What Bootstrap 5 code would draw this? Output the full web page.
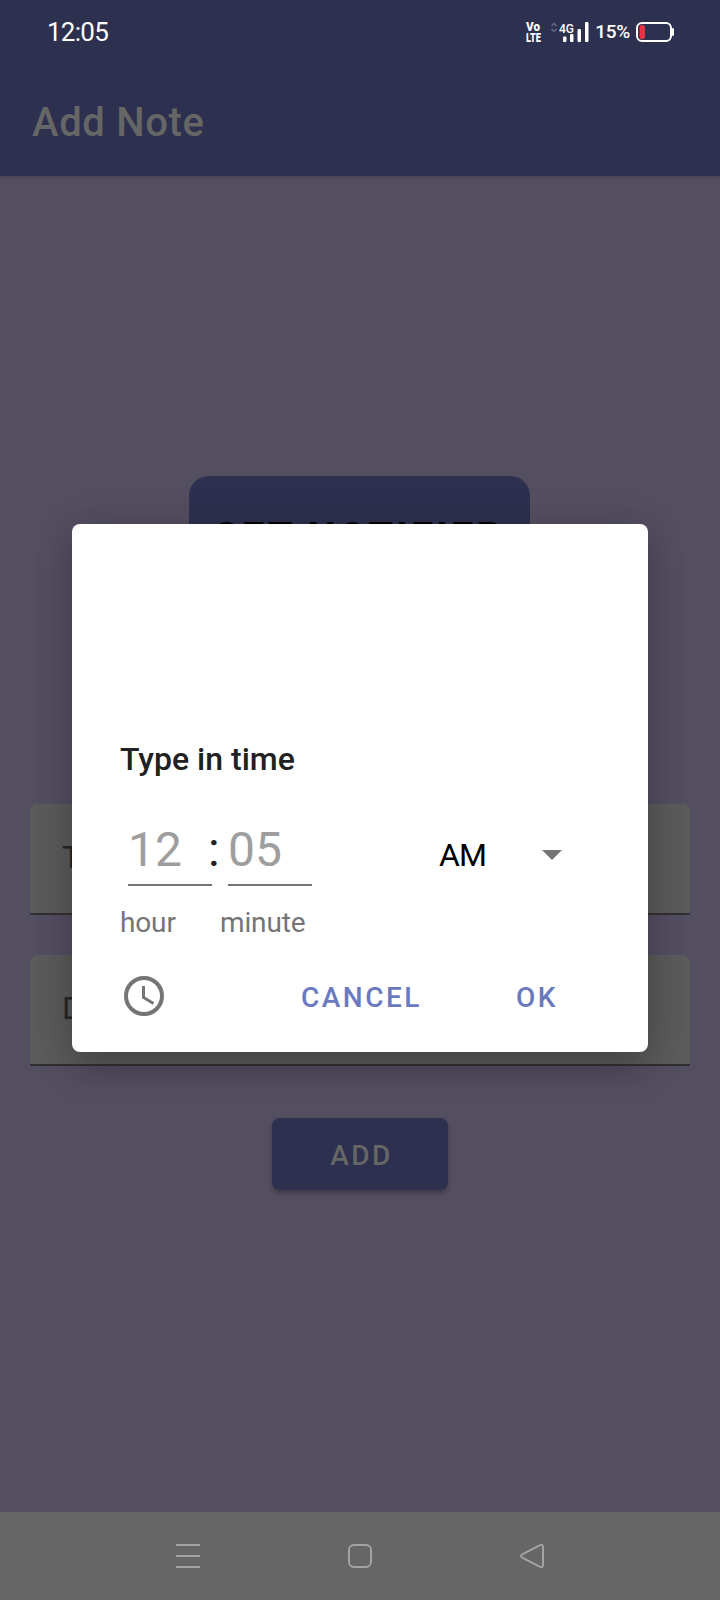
<!DOCTYPE html>
<html lang="en">
<head>
<meta charset="utf-8">
<meta name="viewport" content="width=device-width, initial-scale=1">
<title>Add Note</title>
<link href="https://cdn.jsdelivr.net/npm/bootstrap@5.3.0/dist/css/bootstrap.min.css" rel="stylesheet">
<style>
  body { background: #544e61; font-family: Roboto, "Liberation Sans", sans-serif; height: 1600px; overflow: hidden; }
  .screen { width: 720px; height: 1600px; }
  .top-area { background: #2d304e; height: 176px; box-shadow: 0 1px 3px rgba(0,0,0,.2); z-index: 1; }
  .status { height: 64px; padding: 0 45px 0 47px; color: #fff; }
  .clock-text { font-size: 26px; line-height: 64px; letter-spacing: -.75px; }
  .pct { font-size: 19px; font-weight: 500; line-height: 64px; letter-spacing: -.3px; margin: 0 6px 0 6px; }
  .app-title { font-size: 40px; font-weight: 500; color: #666; line-height: 47px; letter-spacing: .65px; padding: 35px 32px 0; }
  .notifier { width: 341px; height: 140px; margin: 300px 1px 0 0; border-radius: 20px; background: #2d304e; color: #000; font-size: 40px; font-weight: 700; line-height: 47px; padding-top: 38px; letter-spacing: 3.1px; }
  .field { width: 660px; height: 111px; border-radius: 8px 8px 0 0; background: #5b5b5b; border-bottom: 2px solid #313131; color: #272727; font-size: 32px; line-height: 38px; padding: 34px 32px 0; }
  .field-first { margin-top: 188px; }
  .field-second { margin-top: 40px; }
  .add { width: 176px; height: 72px; margin-top: 52px; border-radius: 8px; background: #2d304e; color: #666; box-shadow: 0 3px 5px rgba(0,0,0,.25); }
  .caps { font-size: 28px; font-weight: 500; letter-spacing: 2.5px; line-height: 34px; }
  .add.caps { padding: 4px 0 0 3px !important; }
  .navbar-system { height: 88px; background: #666; }
  .dialog { left: 72px; top: 524px; width: 576px; height: 528px; padding: 216px 48px 0; border-radius: 8px; background: #fff; box-shadow: 0 18px 36px rgba(0,0,0,.2), 0 0 40px rgba(0,0,0,.1); z-index: 2; }
  .dialog-title { font-size: 32px; font-weight: 500; line-height: 38px; color: #212121; }
  .time-row { margin-top: 46px; }
  .entry { width: 84px; height: 62px; border-bottom: 2px solid #757575; font-size: 48px; line-height: 52px; color: #9e9e9e; }
  .colon { width: 16px; font-size: 48px; line-height: 52px; color: #212121; text-indent: -4px; }
  .ampm { margin: 0 0 0 127px; font-size: 32px; line-height: 38px; color: #000; letter-spacing: -1px; }
  .ampm svg { margin: 0 0 1px 56px; }
  .caption-row { margin-top: 20px; font-size: 28px; line-height: 33px; letter-spacing: -.15px; color: #757575; }
  .hour-label { width: 100px; }
  .actions { margin-top: 33px; height: 48px; }
  .action { color: #6b79bf; padding-top: 4px; }
  .cancel { margin-left: 133px; }
  .ok { margin-left: 94px; }
</style>
<script src="https://cdn.jsdelivr.net/npm/bootstrap@5.3.0/dist/js/bootstrap.bundle.min.js"></script>
</head>
<body>
<div class="screen position-relative d-flex flex-column">
  <header class="top-area">
    <div class="status d-flex align-items-center justify-content-between">
      <span class="clock-text">12:05</span>
      <div class="d-flex align-items-center">
        <svg width="67" height="64" viewBox="0 0 67 64" fill="#fff" font-family="Roboto" overflow="visible">
          <g font-weight="900" font-size="12"><text x="4" y="30.500" textLength="14" lengthAdjust="spacingAndGlyphs">Vo</text><text x="4" y="42" textLength="15" lengthAdjust="spacingAndGlyphs">LTE</text></g>
          <path d="M29.500 26l2.500-2.500 2.500 2.500M29.500 29l2.500 2.500 2.500-2.500" fill="none" stroke="#5b5e7a" stroke-width="1.800"/>
          <text x="37" y="33" font-size="13.500" font-weight="500" textLength="15" lengthAdjust="spacingAndGlyphs">4G</text>
          <rect x="41" y="36.500" width="3.500" height="5.500" rx="1"/><rect x="48" y="34" width="3.500" height="8" rx="1"/><rect x="55.500" y="29" width="3.500" height="13" rx="1"/><rect x="63" y="22" width="3.500" height="20" rx="1"/>
        </svg>
        <span class="pct">15%</span>
        <svg width="39" height="64" viewBox="2 0 39 64">
          <rect x="3" y="23" width="34" height="18" rx="5" fill="none" stroke="#fff" stroke-width="2"/>
          <rect x="5.500" y="25" width="5.500" height="14" rx="2.500" fill="#e93448"/>
          <rect x="38" y="28" width="2" height="8" rx="1" fill="#fff"/>
        </svg>
      </div>
    </div>
    <h1 class="app-title m-0">Add Note</h1>
  </header>
  <main class="flex-grow-1 d-flex flex-column align-items-center">
    <div class="notifier text-center text-nowrap">SET NOTIFIER</div>
    <div class="field field-first">Title</div>
    <div class="field field-second">Description</div>
    <button class="add btn border-0 caps" type="button">ADD</button>
  </main>
  <footer class="navbar-system d-flex align-items-center">
    <svg width="720" height="88" fill="none" stroke="#a3a3a3" stroke-width="2">
      <path d="M176 33h24M176 44h24M176 55h24"/>
      <rect x="349" y="33" width="22" height="22" rx="5"/>
      <path d="M521.8 42.7L539.5 33.4Q543 32 543 35V53Q543 56 539.5 54.6L521.8 45.3Q520 44 521.8 42.7Z"/>
    </svg>
  </footer>

  <section class="dialog position-absolute" role="dialog" aria-label="Type in time">
    <h2 class="dialog-title m-0">Type in time</h2>
    <div class="time-row d-flex ps-2">
      <div class="entry">12</div>
      <div class="colon">:</div>
      <div class="entry">05</div>
      <div class="d-flex align-items-center ampm">
        <span>AM</span>
        <svg width="20" height="10" viewBox="0 0 20 10"><path d="M0 0h20L10 10z" fill="#757575"/></svg>
      </div>
    </div>
    <div class="caption-row d-flex"><span class="hour-label">hour</span><span>minute</span></div>
    <div class="actions d-flex align-items-center">
      <svg width="48" height="48" viewBox="0 0 48 48" fill="none" stroke="#757575"><circle cx="24" cy="24" r="18" stroke-width="4"/><path d="M23.5 14v11.5l10 6" stroke-width="3"/></svg>
      <span class="action caps cancel">CANCEL</span>
      <span class="action caps ok">OK</span>
    </div>
  </section>
</div>
</body>
</html>
